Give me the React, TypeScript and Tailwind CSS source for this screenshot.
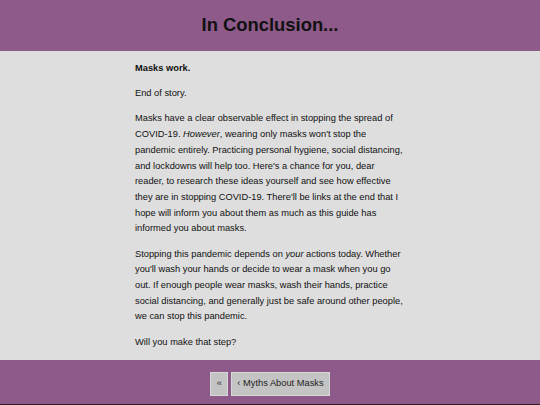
export default function App() {
  return (
    <div
      className="flex min-h-[405px] w-[540px] flex-col bg-[#dedede] text-[#111]"
      style={{ fontFamily: '"Liberation Sans", Arial, sans-serif' }}
    >
      <header className="flex h-[51px] items-center justify-center bg-[#8d5a89]">
        <h1 className="text-[18.4px] font-bold leading-none text-[#111]">In Conclusion...</h1>
      </header>

      <main className="mx-auto w-[270px] pt-[10px] pb-[10px] text-[9.3px] leading-[15.7px]">
        <p className="font-bold">Masks work.</p>
        <p className="mt-[9.5px]">End of story.</p>
        <p className="mt-[9.5px]">
          Masks have a clear observable effect in stopping the spread of COVID-19. <em>However</em>,
          wearing only masks won't stop the pandemic entirely. Practicing personal hygiene, social
          distancing, and lockdowns will help too. Here's a chance for you, dear reader, to research
          these ideas yourself and see how effective they are in stopping COVID-19. There'll be links
          at the end that I hope will inform you about them as much as this guide has informed you
          about masks.
        </p>
        <p className="mt-[9.5px]">
          Stopping this pandemic depends on <em>your</em> actions today. Whether you'll wash your
          hands or decide to wear a mask when you go out. If enough people wear masks, wash their
          hands, practice social distancing, and generally just be safe around other people, we can
          stop this pandemic.
        </p>
        <p className="mt-[9.5px]">Will you make that step?</p>
      </main>

      <footer className="flex h-[46px] items-start justify-center gap-[3px] border-b-2 border-[#2a1f2a] bg-[#8d5a89] pt-[12px]">
        <button
          type="button"
          className="flex h-[24px] w-[18px] items-center justify-center border border-[#d8d8d8] bg-[#c4c4c4] text-[9.3px] text-[#333]"
        >
          «
        </button>
        <button
          type="button"
          className="flex h-[24px] items-center border border-[#d8d8d8] bg-[#c4c4c4] px-[5px] text-[9.3px] text-[#222]"
        >
          ‹ Myths About Masks
        </button>
      </footer>
    </div>
  );
}
